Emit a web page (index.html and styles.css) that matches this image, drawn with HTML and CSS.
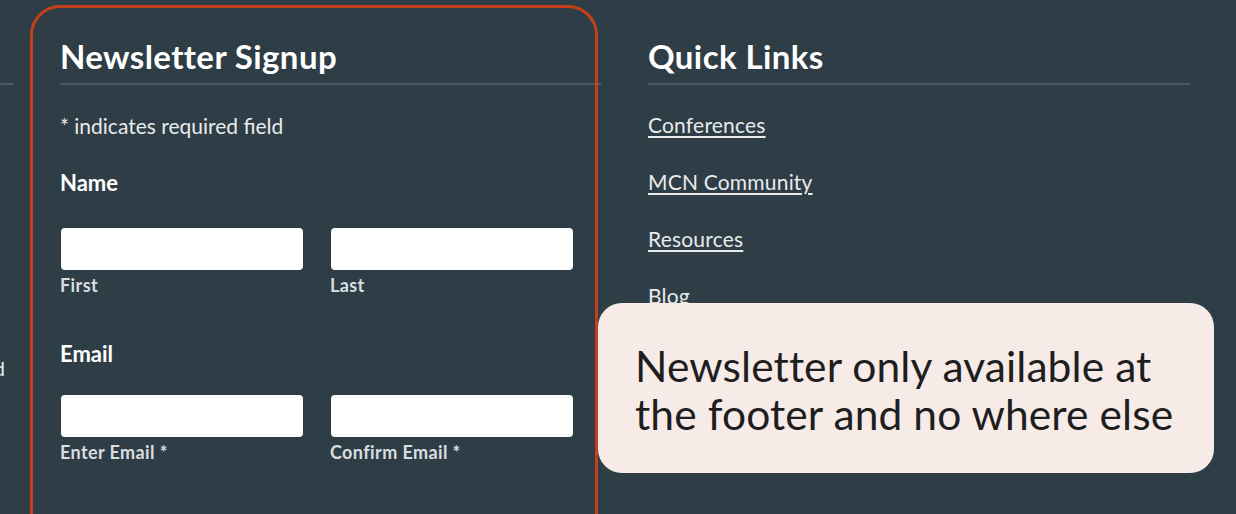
FILE: index.html
```html
<!DOCTYPE html>
<html>

<head>
  <meta charset="utf-8" />
  <title>Footer - Newsletter Signup</title>
  <meta name="viewport" content="width=device-width, initial-scale=1">
  <link rel="stylesheet" href="styles.css">
</head>

<body>
  <div class="footer">
    <div class="col col-about">
      <h2 class="col-title">&nbsp;</h2>
      <p class="cut-text"><span>All rights reserved</span></p>
    </div>

    <div class="col col-newsletter">
      <h2 class="col-title">Newsletter Signup</h2>
      <p class="required-note">* indicates required field</p>

      <div class="field-group">
        <div class="field-name">Name</div>
        <div class="field-row">
          <div class="field">
            <input type="text" id="first_name" class="text-input">
            <label for="first_name" class="field-label">First</label>
          </div>
          <div class="field">
            <input type="text" id="last_name" class="text-input">
            <label for="last_name" class="field-label">Last</label>
          </div>
        </div>
      </div>

      <div class="field-group field-group-email">
        <div class="field-name">Email</div>
        <div class="field-row">
          <div class="field">
            <input type="email" id="email" class="text-input">
            <label for="email" class="field-label">Enter Email *</label>
          </div>
          <div class="field">
            <input type="email" id="email_confirm" class="text-input">
            <label for="email_confirm" class="field-label">Confirm Email *</label>
          </div>
        </div>
      </div>
    </div>

    <div class="col col-links">
      <h2 class="col-title">Quick Links</h2>
      <ul class="link-list">
        <li><a href="#">Conferences</a></li>
        <li><a href="#">MCN Community</a></li>
        <li><a href="#">Resources</a></li>
        <li><a href="#">Blog</a></li>
      </ul>
    </div>
  </div>

  <!-- annotation -->
  <div class="callout">
    Newsletter only available at<br>
    the footer and no where else
  </div>
</body>

</html>
```

FILE: styles.css
```css
body {
  margin: 0;
  height: 514px;
  overflow: hidden;
  background-color: #2e3d46;
  color: #e8ebec;
  font-family: Lato, "Liberation Sans", sans-serif;
}

.footer {
  display: grid;
  grid-template-columns: 13px 541px 542px;
  column-gap: 47px;
  padding-top: 37px;
}

.col {
  position: relative;
  min-width: 0;
}

.col-title {
  margin: 0;
  padding-bottom: 8px;
  border-bottom: 2px solid #4a5a62;
  font-size: 33px;
  line-height: 38px;
  font-weight: 700;
  color: #fff;
  letter-spacing: 0.4px;
  white-space: nowrap;
}

/* column cut off on the left edge */
.cut-text {
  display: flex;
  justify-content: flex-end;
  overflow: hidden;
  margin: 271px 0 0 0;
  padding-right: 8px;
  font-size: 20px;
  line-height: 24px;
  white-space: nowrap;
}

/* the red marker round the signup column */
.col-newsletter::before {
  content: "";
  position: absolute;
  left: -30px;
  right: 3px;
  top: -32px;
  height: 600px;
  border: 3px solid #c2411b;
  border-radius: 30px;
  pointer-events: none;
}

.required-note {
  margin: 29px 0 0 0;
  font-size: 21px;
  line-height: 24px;
}

.field-group {
  margin-top: 33px;
}

.field-group-email {
  margin-top: 47px;
}

.field-name {
  font-size: 22px;
  line-height: 24px;
  font-weight: 700;
  color: #fff;
}

.field-row {
  display: grid;
  grid-template-columns: 242px 242px;
  column-gap: 28px;
  margin-top: 33px;
}

.field-group-email .field-row {
  margin-top: 29px;
}

.text-input {
  display: block;
  box-sizing: border-box;
  width: 100%;
  height: 42px;
  margin: 0 0 5px 1px;
  border: none;
  border-radius: 4px;
  background-color: #fff;
}

.field-label {
  display: block;
  font-size: 18px;
  line-height: 20px;
  font-weight: 700;
  letter-spacing: 0.4px;
  color: #d9dde0;
}

.link-list {
  list-style: none;
  margin: 0;
  padding: 28px 0 0 0;
}

.link-list li {
  margin-bottom: 33px;
  font-size: 21px;
  line-height: 24px;
  letter-spacing: 0.2px;
}

.link-list a {
  color: #e8ebec;
  text-decoration: underline;
  text-underline-offset: 3px;
}

.callout {
  position: absolute;
  left: 598px;
  top: 303px;
  box-sizing: border-box;
  width: 616px;
  height: 170px;
  padding: 39px 0 0 37px;
  border-radius: 24px;
  background-color: #f6ebe7;
  color: #1e1e1e;
  font-size: 42.5px;
  line-height: 48px;
  letter-spacing: 0.1px;
  white-space: nowrap;
}
```
